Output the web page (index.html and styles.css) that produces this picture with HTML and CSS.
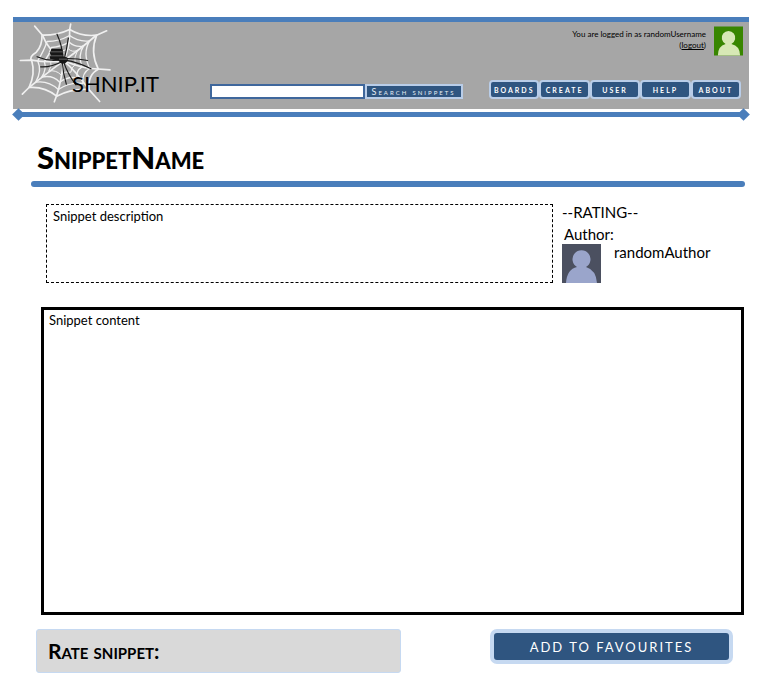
FILE: index.html
```html
<!DOCTYPE html>
<html lang="en">
<head>
<meta charset="utf-8">
<title>Shnip.it</title>
<meta name="viewport" content="width=device-width, initial-scale=1">
<link rel="stylesheet" href="styles.css">
</head>
<body>
<header class="banner">
  <a class="logo" href="#">
    <svg class="web" viewBox="54 69 276 243" aria-hidden="true">
      <g fill="none" stroke="#f0f0f0" stroke-width="5" stroke-linecap="round" stroke-linejoin="round">
        <path d="M188 184Q140 150 125 108L101 80M188 184Q208 140 206 90L209 74M188 184Q230 155 285 108L317 94M188 184Q240 205 270 207L327 211M188 184Q225 215 262 268L296 306M188 184Q180 250 167 288L160 307M188 184Q145 215 84 264L64 284M188 184Q140 190 92 182L58 183"/>
        <path d="M123 107Q168 108 206 90Q242 112 287 107Q266 158 292 209Q260 225 264 270Q212 266 167 290Q130 260 84 264Q104 222 92 183Q83 172 106 158Q124 138 123 107Z"/>
        <path stroke-width="4" d="M138 126Q174 126 206 108Q232 128 266 124Q244 160 266 207Q242 220 246 252Q208 246 172 270Q142 242 104 248Q124 215 110 184Q130 152 138 126Z"/>
        <path stroke-width="4" d="M151 144Q180 142 205 128Q224 145 248 139Q230 166 243 202Q224 214 228 235Q200 230 176 248Q154 225 122 233Q138 210 130 186Q146 165 151 144Z"/>
        <path stroke-width="3" d="M162 156Q184 158 202 148Q214 160 230 152Q218 172 222 196Q208 206 210 218Q192 214 180 226Q164 210 143 215Q154 198 149 186Q162 170 162 156Z"/>
      </g>
      <g fill="none" stroke="#1c1c1c" stroke-width="3.5" stroke-linecap="round" stroke-linejoin="round">
        <path d="M186 178Q184 138 168 104M190 178Q197 150 202 116M184 180Q145 188 108 172M184 186Q150 204 119 202M192 177Q225 176 260 183M192 182Q232 188 270 208M184 188Q186 222 196 254M188 188Q202 228 225 256"/>
      </g>
      <path fill="#161616" d="M151 148h32l3 7-3 3 4 8-2 4 14 4 2 10-9 8h-12l-8-9-24-4-2-8 4-3-4-9 3-4z"/>
      <path stroke="#858585" stroke-width="2" d="M148 157h37M147 169h38M174 179h24"/>
    </svg>
    <span class="wordmark">SHNIP.IT</span>
  </a>
  <form class="search" role="search">
    <input class="search-field" type="search" aria-label="Search snippets">
    <button class="search-button" type="button">Search snippets</button>
  </form>
  <div class="session">
    <div class="account">
      <p class="login">You are logged in as randomUsername<br>(<a href="#">logout</a>)</p>
      <svg class="avatar" viewBox="0 0 30 30" role="img" aria-label="randomUsername">
        <path fill="#388600" d="M0 0h30v30H0z"/>
        <path fill="#d7e8b5" d="M4 30Q4 20 12 18a7 7 0 1 1 6 0Q27 20 27 30z"/>
      </svg>
    </div>
    <nav class="menu">
      <a href="#">boards</a>
      <a href="#">create</a>
      <a href="#">user</a>
      <a href="#">help</a>
      <a href="#">about</a>
    </nav>
  </div>
</header>
<div class="divider"></div>
<main class="snippet">
  <h1>SnippetName</h1>
  <div class="summary">
    <p class="description">Snippet description</p>
    <aside class="meta">
      <p>--RATING--</p>
      <p class="author-label">Author:</p>
      <div class="author">
        <svg class="portrait" viewBox="0 0 39 39" role="img" aria-label="randomAuthor">
          <path fill="#4b5060" d="M0 0h39v39H0z"/>
          <path fill="#9aa5cb" d="M4 39Q5 25 15 23A9 9 0 1 1 24 23Q34 26 35 39z"/>
        </svg>
        <span>randomAuthor</span>
      </div>
    </aside>
  </div>
  <div class="content">Snippet content</div>
  <div class="actions">
    <h2 class="rate">Rate snippet:</h2>
    <button class="favourite" type="button">ADD TO FAVOURITES</button>
  </div>
</main>
</body>
</html>
```
FILE: styles.css
```css
* {
  box-sizing: border-box;
}

body {
  margin: 0;
  padding: 17px 16px 8px 13px;
  background: #fff;
  color: #000;
  font-family: Lato, "Liberation Sans", sans-serif;
  font-size: 13px;
  line-height: 20px;
}

p,
h1,
h2 {
  margin: 0;
}

.banner {
  display: flex;
  justify-content: space-between;
  min-height: 92px;
  padding: 0 6px 4px;
  border-top: 5px solid #4a7ebb;
  background: #a6a6a6;
}

.logo {
  position: relative;
  width: 140px;
  color: #000;
  text-decoration: none;
}

.web {
  display: block;
  width: 92px;
  height: 82px;
}

.wordmark {
  position: absolute;
  right: 0;
  bottom: 6px;
  font-size: 22px;
  line-height: 30px;
}

.search {
  display: flex;
  align-self: flex-end;
  width: 253px;
  height: 15px;
  margin: 0 0 6px 24px;
}

.search-field {
  flex: 1;
  min-width: 0;
  padding: 0 4px;
  border: 2px solid #3f679c;
  border-radius: 0;
  background: #fff;
  font: inherit;
  font-size: 10px;
}

.search-button {
  width: 98px;
  padding: 0;
  border: 2px solid #b9cde8;
  background: #2f5580;
  color: #e6edf5;
  font-family: inherit;
  font-size: 9px;
  font-variant: small-caps;
  letter-spacing: 2px;
  line-height: 11px;
  white-space: nowrap;
}

.session {
  display: flex;
  flex-direction: column;
  justify-content: space-between;
  align-items: flex-end;
  padding: 4px 0 6px;
}

.account {
  display: flex;
  gap: 8px;
  font-size: 8px;
  line-height: 11px;
  text-align: right;
}

.login {
  padding-top: 3px;
}

.login a {
  color: inherit;
}

.avatar {
  width: 29px;
  height: 30px;
}

.menu {
  display: flex;
  width: 252px;
  margin-right: 2px;
}

.menu a {
  flex: 1;
  border: 2px solid #b9cde8;
  border-radius: 4px;
  background: #2f5580;
  color: #fff;
  font-size: 10px;
  font-variant: small-caps;
  font-weight: bold;
  letter-spacing: 2px;
  line-height: 15px;
  text-align: center;
  text-decoration: none;
}

.divider {
  position: relative;
  height: 5px;
  margin: 3px 5px 0;
  background: #4a7ebb;
}

.divider::before,
.divider::after {
  content: "";
  position: absolute;
  top: -2px;
  width: 9px;
  height: 9px;
  background: #4a7ebb;
  transform: rotate(45deg);
}

.divider::before {
  left: -4px;
}

.divider::after {
  right: -4px;
}

.snippet {
  padding: 20px 4px 0 18px;
}

h1 {
  padding: 0 6px;
  font-size: 31px;
  font-variant: small-caps;
  font-weight: 900;
  line-height: 40px;
}

h1::after {
  content: "";
  display: block;
  height: 6px;
  margin: 4px -6px 0;
  border-radius: 3px;
  background: #4a7ebb;
}

.summary {
  display: flex;
  gap: 9px;
  margin: 17px 0 24px 15px;
}

.description {
  flex: 1;
  padding: 1px 6px;
  border: 1px dashed #000;
}

.meta {
  width: 183px;
  font-size: 15px;
  line-height: 16px;
}

.author-label {
  margin: 6px 0 2px 2px;
}

.author {
  display: flex;
  gap: 13px;
}

.portrait {
  width: 39px;
  height: 39px;
}

.content {
  min-height: 308px;
  margin: 0 1px 14px 10px;
  padding: 0 5px;
  border: 3px solid #000;
}

.actions {
  display: flex;
  justify-content: space-between;
  align-items: flex-start;
  margin: 0 12px 0 5px;
}

.rate {
  width: 365px;
  padding: 6px 11px;
  border: 1px solid #c6d9f1;
  border-radius: 3px;
  background: #d9d9d9;
  font-size: 21px;
  font-variant: small-caps;
  line-height: 30px;
}

.favourite {
  width: 243px;
  height: 35px;
  padding: 0;
  border: 4px solid #c6d9f1;
  border-radius: 7px;
  background: #2f5580;
  color: #fff;
  font-family: inherit;
  font-size: 13px;
  letter-spacing: 2px;
}
```
